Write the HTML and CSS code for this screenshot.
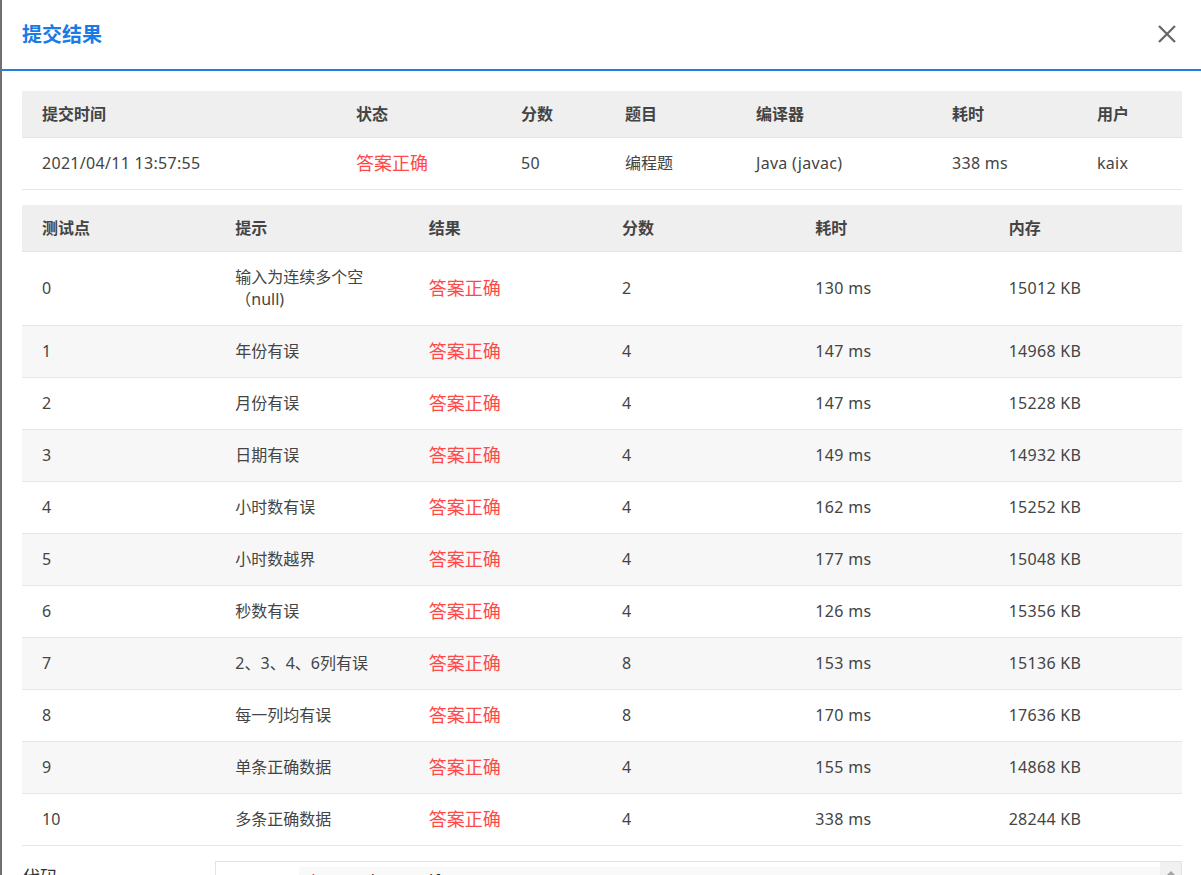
FILE: index.html
```html
<!DOCTYPE html>
<html lang="zh-CN">
<head>
<meta charset="utf-8">
<title>提交结果</title>
<link rel="stylesheet" href="styles.css">
</head>
<body>
<div class="modal">
  <div class="modal-header">
    <h2 class="modal-title">提交结果</h2>
    <button class="close" aria-label="关闭">
      <svg width="20" height="20" viewBox="0 0 20 20"><path d="M2 2 L18 18 M18 2 L2 18" stroke="#666" stroke-width="2.2" fill="none"/></svg>
    </button>
  </div>
  <div class="modal-body">
    <table class="tbl summary">
      <colgroup>
        <col class="c-time"><col class="c-status"><col class="c-score"><col class="c-problem"><col class="c-compiler"><col class="c-cost"><col class="c-user">
      </colgroup>
      <thead>
        <tr><th>提交时间</th><th>状态</th><th>分数</th><th>题目</th><th>编译器</th><th>耗时</th><th>用户</th></tr>
      </thead>
      <tbody>
        <tr><td class="num">2021/04/11 13:57:55</td><td class="ok">答案正确</td><td class="num">50</td><td>编程题</td><td class="num">Java (javac)</td><td class="num">338 ms</td><td class="num">kaix</td></tr>
      </tbody>
    </table>

    <table class="tbl cases">
      <thead>
        <tr><th>测试点</th><th>提示</th><th>结果</th><th>分数</th><th>耗时</th><th>内存</th></tr>
      </thead>
      <tbody>
        <tr><td>0</td><td>输入为连续多个空（null)</td><td class="ok">答案正确</td><td>2</td><td class="num">130 ms</td><td class="num">15012 KB</td></tr>
        <tr><td>1</td><td>年份有误</td><td class="ok">答案正确</td><td>4</td><td class="num">147 ms</td><td class="num">14968 KB</td></tr>
        <tr><td>2</td><td>月份有误</td><td class="ok">答案正确</td><td>4</td><td class="num">147 ms</td><td class="num">15228 KB</td></tr>
        <tr><td>3</td><td>日期有误</td><td class="ok">答案正确</td><td>4</td><td class="num">149 ms</td><td class="num">14932 KB</td></tr>
        <tr><td>4</td><td>小时数有误</td><td class="ok">答案正确</td><td>4</td><td class="num">162 ms</td><td class="num">15252 KB</td></tr>
        <tr><td>5</td><td>小时数越界</td><td class="ok">答案正确</td><td>4</td><td class="num">177 ms</td><td class="num">15048 KB</td></tr>
        <tr><td>6</td><td>秒数有误</td><td class="ok">答案正确</td><td>4</td><td class="num">126 ms</td><td class="num">15356 KB</td></tr>
        <tr><td>7</td><td>2、3、4、6列有误</td><td class="ok">答案正确</td><td>8</td><td class="num">153 ms</td><td class="num">15136 KB</td></tr>
        <tr><td>8</td><td>每一列均有误</td><td class="ok">答案正确</td><td>8</td><td class="num">170 ms</td><td class="num">17636 KB</td></tr>
        <tr><td>9</td><td>单条正确数据</td><td class="ok">答案正确</td><td>4</td><td class="num">155 ms</td><td class="num">14868 KB</td></tr>
        <tr><td>10</td><td>多条正确数据</td><td class="ok">答案正确</td><td>4</td><td class="num">338 ms</td><td class="num">28244 KB</td></tr>
      </tbody>
    </table>

    <div class="code-row">
      <div class="code-label">代码</div>
      <div class="editor">
        <div class="gutter"></div>
        <div class="code">
          <pre class="lines"><span class="kw">import</span> java.util.Scanner;
<span class="kw">import</span> java.util.ArrayList;
</pre>
        </div>
        <div class="vscroll"><span class="arrow"></span></div>
      </div>
    </div>
  </div>
</div>
</body>
</html>
```

FILE: styles.css
```css
html, body {
  margin: 0;
  padding: 0;
  height: 100%;
  overflow: hidden;
}
body {
  background: #707070;
  font-family: "Noto Sans", "Noto Sans CJK SC", sans-serif;
  color: #444;
}
.modal {
  margin-left: 2px;
  background: #fff;
  min-height: 100%;
}
.modal-header {
  height: 69px;
  border-bottom: 2px solid #1f7ee6;
  display: flex;
  align-items: center;
  justify-content: space-between;
  padding: 0 24px 0 20px;
}
.modal-title {
  margin: 0;
  font-size: 20px;
  font-weight: 700;
  color: #1a7ae6;
  line-height: 28px;
}
.close {
  border: 0;
  background: none;
  padding: 0;
  width: 20px;
  height: 20px;
  cursor: pointer;
  display: flex;
  margin-top: -2px;
}
.modal-body {
  padding: 20px 19px 0 20px;
}
.tbl {
  width: 100%;
  border-collapse: separate;
  border-spacing: 0;
  table-layout: fixed;
  font-size: 16px;
}
.tbl th {
  background: #efefef;
  text-align: left;
  font-weight: 700;
  color: #444;
  padding: 12px 20px;
  line-height: 22px;
  border-bottom: 1px solid #e3e3e3;
}
.tbl td {
  text-align: left;
  padding: 14px 20px 15px;
  line-height: 22px;
  border-bottom: 1px solid #e6e6e6;
  color: #444;
  vertical-align: middle;
}
.tbl td.num {
  letter-spacing: 0.3px;
}
.tbl td.ok {
  color: #ff4949;
  font-size: 18px;
}
.c-time { width: 314px; }
.c-status { width: 165px; }
.c-score { width: 104px; }
.c-problem { width: 131px; }
.c-compiler { width: 196px; }
.c-cost { width: 145px; }
.c-user { width: 105px; }

.cases {
  margin-top: 15px;
}
.cases tbody tr:nth-child(even) td {
  background: #f7f7f7;
}

.code-row {
  display: flex;
  margin-top: 15px;
}
.code-label {
  width: 193px;
  flex: none;
  font-size: 18px;
  line-height: 24px;
  padding-top: 4px;
  color: #333;
}
.editor {
  flex: 1;
  display: flex;
  height: 300px;
  border: 1px solid #e3e3e3;
}
.gutter {
  width: 83px;
  flex: none;
  background: #fff;
}
.code {
  flex: 1;
  padding-top: 5px;
}
.lines {
  margin: 0;
  height: 100%;
  background: #f9f9f9;
  font-family: "Liberation Mono", monospace;
  font-size: 14px;
  line-height: 20px;
  padding: 4px 10px;
  color: #333;
}
.kw { color: #e0245e; }
.vscroll {
  width: 21px;
  flex: none;
  background: #f1f1f1;
  display: flex;
  justify-content: center;
  padding-top: 9px;
}
.arrow {
  width: 0;
  height: 0;
  border-left: 4px solid transparent;
  border-right: 4px solid transparent;
  border-bottom: 4px solid #a3a3a3;
}
```
